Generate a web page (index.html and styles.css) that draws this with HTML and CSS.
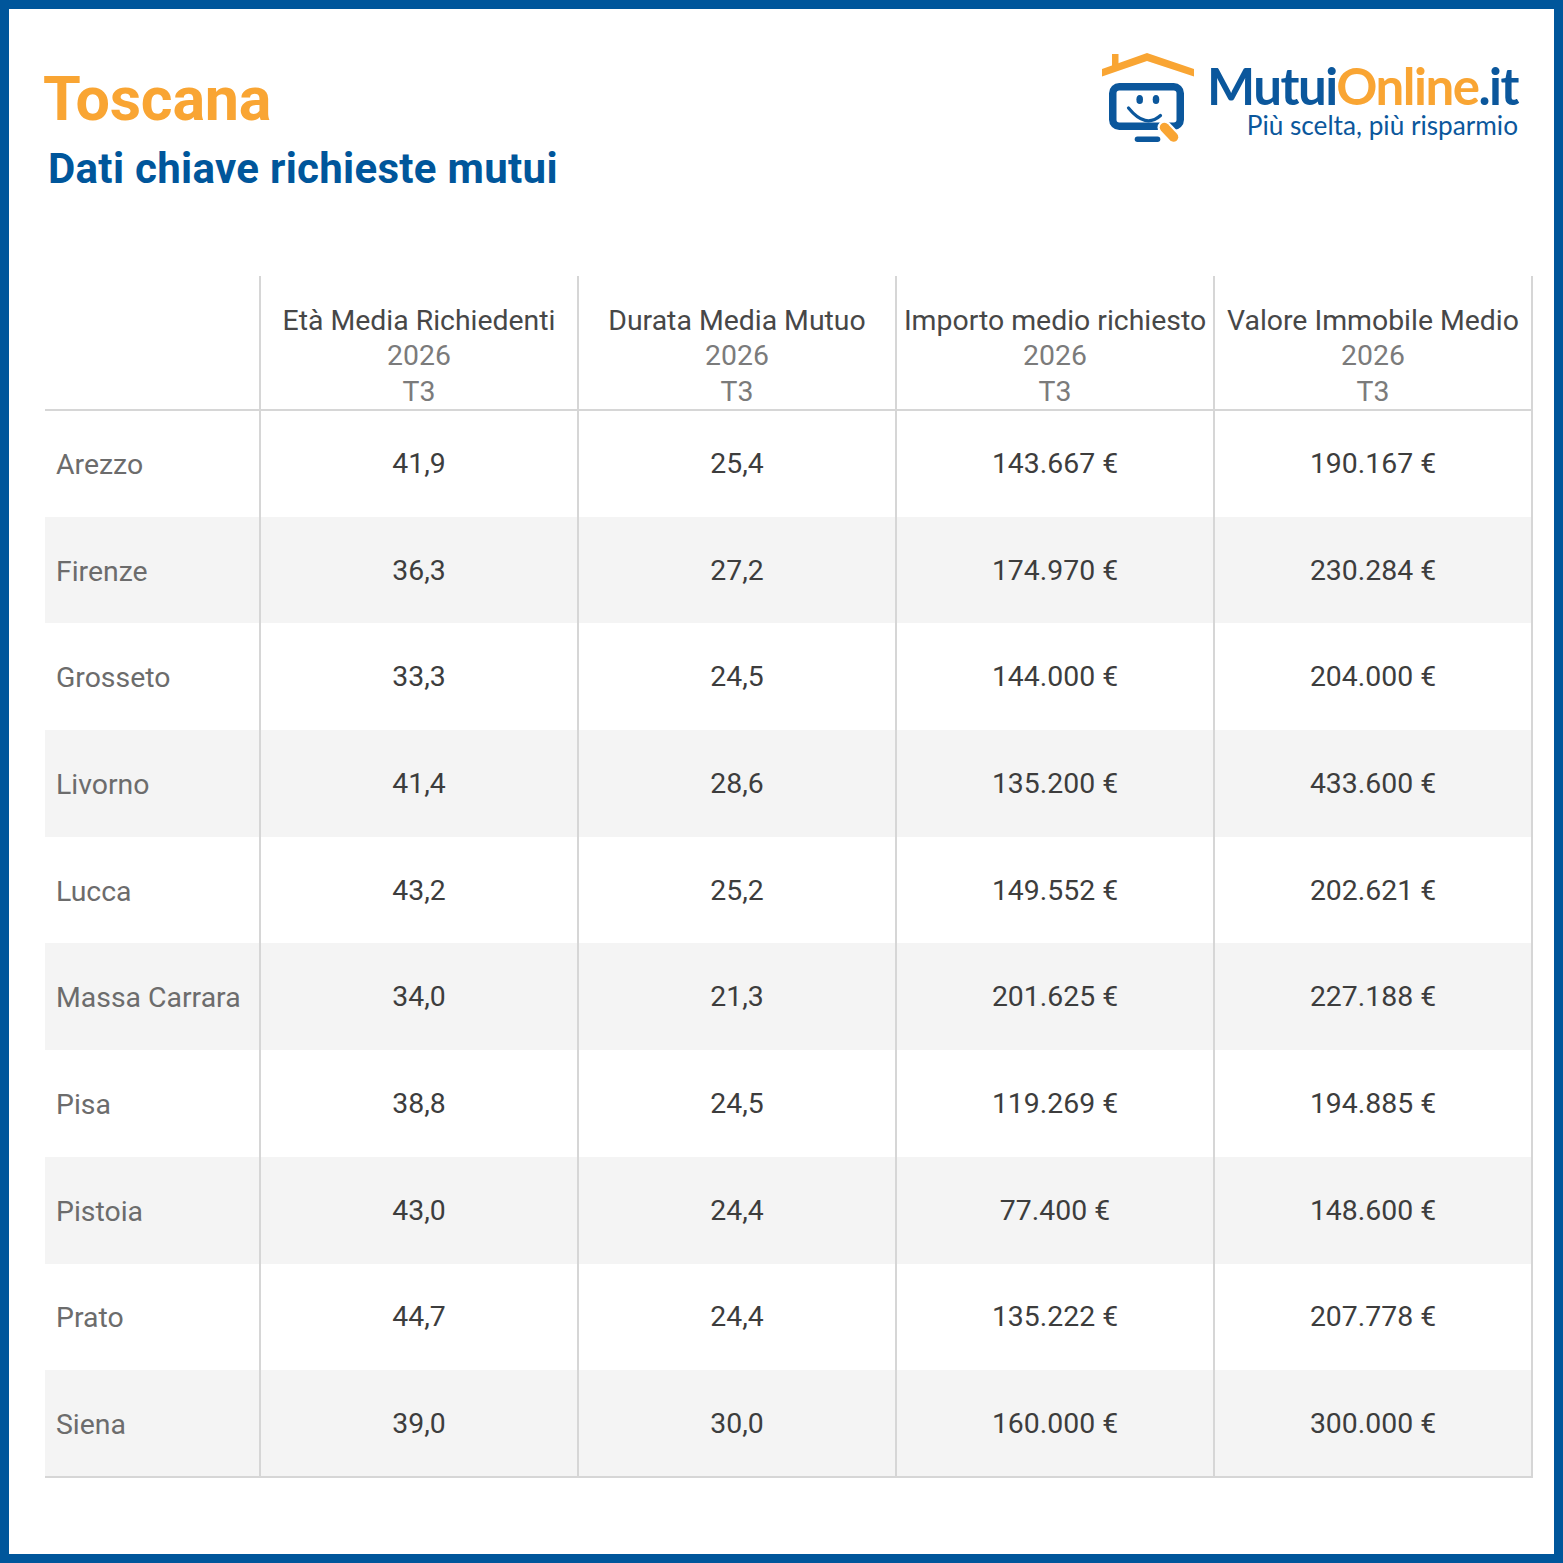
FILE: index.html
```html
<!DOCTYPE html>
<html lang="it">
<head>
<meta charset="utf-8">
<title>Toscana - Dati chiave richieste mutui</title>
<link rel="stylesheet" href="styles.css">
</head>
<body>
<div class="frame">
  <header class="top">
    <div class="titles">
      <h1 class="region">Toscana</h1>
      <h2 class="subtitle">Dati chiave richieste mutui</h2>
    </div>
    <div class="logo">
      <svg class="logo-icon" width="100" height="100" viewBox="0 0 100 100" aria-hidden="true">
        <rect x="15" y="6" width="6.5" height="14" fill="#f9a533"/>
        <polygon points="5,21 50,5 97,21 97,28.5 50,13 5,28.5" fill="#f9a533"/>
        <rect x="15.75" y="38.75" width="67.5" height="39.5" rx="6.5" fill="none" stroke="#0b579c" stroke-width="7.5"/>
        <ellipse cx="42.7" cy="51.5" rx="3.3" ry="4.6" fill="#0b579c"/>
        <ellipse cx="59" cy="51.5" rx="3.3" ry="4.6" fill="#0b579c"/>
        <path d="M31.5 60 Q48.6 81 63.5 67.5" fill="none" stroke="#0b579c" stroke-width="3.2" stroke-linecap="round"/>
        <line x1="67.5" y1="79.5" x2="76.5" y2="89" stroke="#ffffff" stroke-width="14" stroke-linecap="round"/>
        <line x1="67.5" y1="79.5" x2="76.5" y2="89" stroke="#f9a533" stroke-width="9.5" stroke-linecap="round"/>
        <rect x="37.7" y="88.5" width="25.6" height="5.5" rx="2.75" fill="#0b579c"/>
      </svg>
      <div class="logo-text">
        <div class="brand"><span class="brand-blue">Mutui</span><span class="brand-orange">Online</span><span class="brand-blue">.it</span></div>
        <div class="tagline">Più scelta, più risparmio</div>
      </div>
    </div>
  </header>

  <table class="data">
    <colgroup>
      <col class="c-name">
      <col class="c-val">
      <col class="c-val">
      <col class="c-val">
      <col class="c-val">
    </colgroup>
    <thead>
      <tr>
        <th class="blank"></th>
        <th><span class="h-main">Età Media Richiedenti</span><span class="h-sub">2026</span><span class="h-sub">T3</span></th>
        <th><span class="h-main">Durata Media Mutuo</span><span class="h-sub">2026</span><span class="h-sub">T3</span></th>
        <th><span class="h-main">Importo medio richiesto</span><span class="h-sub">2026</span><span class="h-sub">T3</span></th>
        <th><span class="h-main">Valore Immobile Medio</span><span class="h-sub">2026</span><span class="h-sub">T3</span></th>
      </tr>
    </thead>
    <tbody>
      <tr><td class="name">Arezzo</td><td>41,9</td><td>25,4</td><td>143.667 €</td><td>190.167 €</td></tr>
      <tr><td class="name">Firenze</td><td>36,3</td><td>27,2</td><td>174.970 €</td><td>230.284 €</td></tr>
      <tr><td class="name">Grosseto</td><td>33,3</td><td>24,5</td><td>144.000 €</td><td>204.000 €</td></tr>
      <tr><td class="name">Livorno</td><td>41,4</td><td>28,6</td><td>135.200 €</td><td>433.600 €</td></tr>
      <tr><td class="name">Lucca</td><td>43,2</td><td>25,2</td><td>149.552 €</td><td>202.621 €</td></tr>
      <tr><td class="name">Massa Carrara</td><td>34,0</td><td>21,3</td><td>201.625 €</td><td>227.188 €</td></tr>
      <tr><td class="name">Pisa</td><td>38,8</td><td>24,5</td><td>119.269 €</td><td>194.885 €</td></tr>
      <tr><td class="name">Pistoia</td><td>43,0</td><td>24,4</td><td>77.400 €</td><td>148.600 €</td></tr>
      <tr><td class="name">Prato</td><td>44,7</td><td>24,4</td><td>135.222 €</td><td>207.778 €</td></tr>
      <tr><td class="name">Siena</td><td>39,0</td><td>30,0</td><td>160.000 €</td><td>300.000 €</td></tr>
    </tbody>
  </table>
</div>
</body>
</html>
```

FILE: styles.css
```css
* { box-sizing: border-box; }

html, body {
  margin: 0;
  padding: 0;
  background: #ffffff;
}

.frame {
  width: 1563px;
  height: 1563px;
  border: 9px solid #00569b;
  background: #ffffff;
  font-family: Roboto, "Liberation Sans", Arial, sans-serif;
  overflow: hidden;
}

.top {
  display: flex;
  justify-content: space-between;
  align-items: flex-start;
  padding: 39px 36px 0 34px;
  height: 180px;
}

.titles {
  margin-top: 20.5px;
}

.region {
  margin: 0;
  font-size: 61px;
  line-height: 1;
  font-weight: 700;
  color: #f9a533;
  letter-spacing: -0.2px;
}

.subtitle {
  margin: 18px 0 0 5px;
  font-size: 42px;
  line-height: 1;
  font-weight: 700;
  color: #00569b;
  letter-spacing: 0.3px;
}

.logo {
  display: flex;
  align-items: flex-start;
  gap: 10px;
}

.logo-icon {
  display: block;
  flex: none;
}

.logo-text {
  padding-top: 12px;
  display: flex;
  flex-direction: column;
  align-items: flex-end;
}

.brand {
  font-family: Lato, "Open Sans", sans-serif;
  font-weight: 700;
  font-size: 51px;
  line-height: 1;
  letter-spacing: -1.5px;
  white-space: nowrap;
}

.brand-blue { color: #0b579c; }
.brand-orange { color: #f9a533; }

.tagline {
  font-family: Lato, "Open Sans", sans-serif;
  font-weight: 400;
  font-size: 26.2px;
  line-height: 1;
  color: #0b579c;
  white-space: nowrap;
  margin-top: 1px;
}

.data {
  margin: 87px 0 0 36px;
  width: 1487px;
  table-layout: fixed;
  border-collapse: collapse;
  font-size: 28.4px;
}

.c-name { width: 215px; }
.c-val { width: 318px; }

.data th {
  height: 134px;
  padding: 0;
  vertical-align: bottom;
  text-align: center;
  font-weight: 400;
  line-height: 35.5px;
  border-left: 2px solid #d6d6d6;
  border-bottom: 2px solid #d6d6d6;
  white-space: nowrap;
}

.data th.blank { border-left: none; }
.data th:last-child, .data td:last-child { border-right: 2px solid #d6d6d6; }

.h-main, .h-sub { display: block; }
.h-main { color: #474747; }
.h-sub { color: #7b7b7b; }

.data td {
  height: 106.7px;
  padding: 0;
  text-align: center;
  vertical-align: middle;
  color: #3d3d3d;
  border-left: 2px solid #d6d6d6;
  white-space: nowrap;
}

.data td.name {
  text-align: left;
  padding-left: 11px;
  padding-top: 2px;
  color: #6c6c6c;
  border-left: none;
}

.data tbody tr:nth-child(even) { background: #f4f4f4; }
.data tbody tr:last-child td { border-bottom: 2px solid #d6d6d6; }
```
